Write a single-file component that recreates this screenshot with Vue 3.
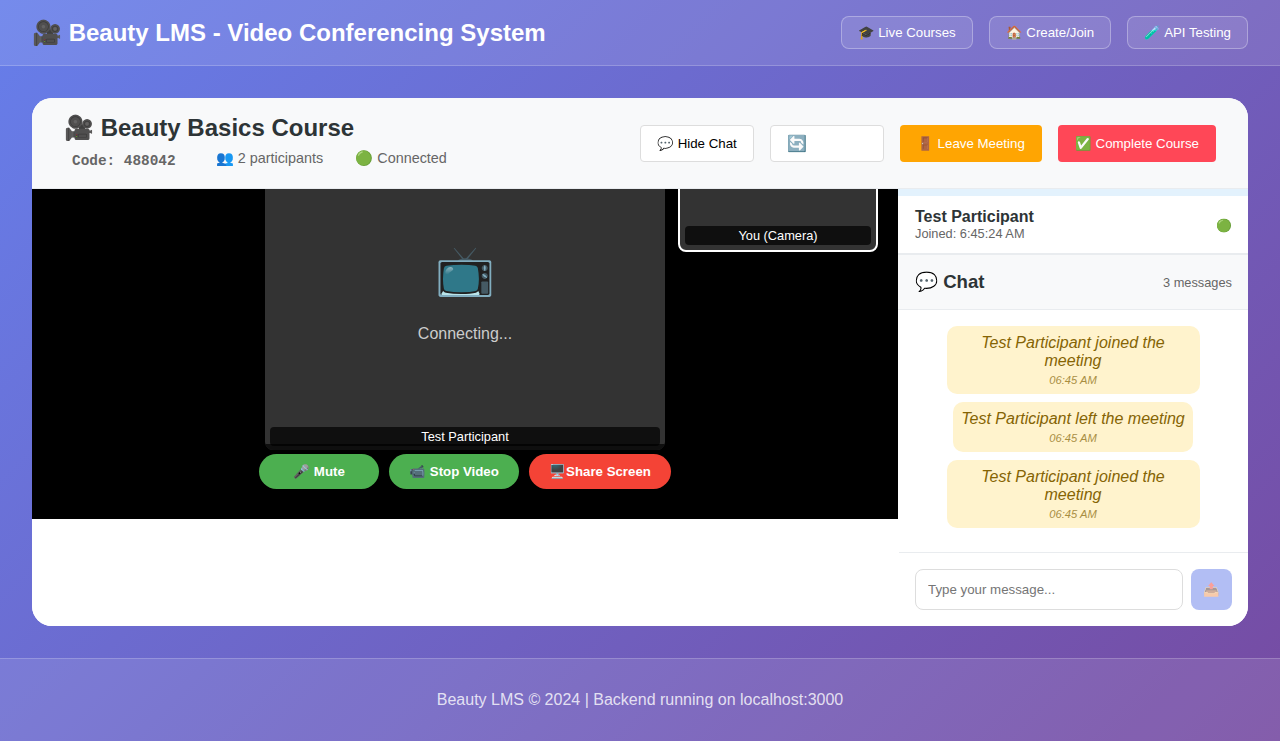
<template>
  <div class="page">
    <header class="top-bar">
      <h1>🎥 Beauty LMS - Video Conferencing System</h1>
      <nav class="top-nav">
        <button v-for="link in links" :key="link" class="nav-btn">{{ link }}</button>
      </nav>
    </header>

    <main class="main">
      <section class="meeting">
        <div class="meeting-header">
          <div class="meeting-info">
            <h2>🎥 Beauty Basics Course</h2>
            <div class="meeting-meta">
              <span class="code">Code: 488042</span>
              <span>👥 2 participants</span>
              <span>🟢 Connected</span>
            </div>
          </div>
          <div class="meeting-actions">
            <button class="action-btn light">💬 Hide Chat</button>
            <button class="action-btn light refresh"><span class="refresh-icon">🔄</span></button>
            <button class="action-btn leave">🚪 Leave Meeting</button>
            <button class="action-btn complete">✅ Complete Course</button>
          </div>
        </div>

        <div class="meeting-body">
          <div class="video-col">
            <div class="video-area">
              <div class="remote-video">
                <div class="placeholder">
                  <div class="placeholder-icon">📺</div>
                  <p>Connecting...</p>
                </div>
                <div class="video-label">Test Participant</div>
              </div>
              <div class="local-video">
                <div class="video-label">You (Camera)</div>
              </div>
              <div class="controls">
                <button class="ctrl-btn green mute">🎤 Mute</button>
                <button class="ctrl-btn green stop">📹 Stop Video</button>
                <button class="ctrl-btn red share">🖥️Share Screen</button>
              </div>
            </div>
          </div>

          <aside class="sidebar">
            <div class="participants">
              <div class="participant">
                <div>
                  <div class="p-name">Test Participant</div>
                  <div class="p-joined">Joined: 6:45:24 AM</div>
                </div>
                <span class="p-status">🟢</span>
              </div>
            </div>

            <div class="chat-header">
              <h3>💬 Chat</h3>
              <span class="msg-count">{{ messages.length }} messages</span>
            </div>

            <div class="chat-messages">
              <div v-for="(msg, i) in messages" :key="i" class="sys-msg">
                <div class="sys-text">{{ msg }}</div>
                <div class="sys-time">06:45 AM</div>
              </div>
            </div>

            <div class="chat-input">
              <input type="text" placeholder="Type your message..." />
              <button class="send-btn">📤</button>
            </div>
          </aside>
        </div>
      </section>
    </main>

    <footer class="footer">Beauty LMS © 2024 | Backend running on localhost:3000</footer>
  </div>
</template>

<script setup>
const links = ['🎓 Live Courses', '🏠 Create/Join', '🧪 API Testing']

const messages = [
  'Test Participant joined the meeting',
  'Test Participant left the meeting',
  'Test Participant joined the meeting'
]
</script>

<style>
body {
  margin: 0;
}
</style>

<style scoped>
.page {
  height: 741px;
  display: flex;
  flex-direction: column;
  overflow: hidden;
  background: linear-gradient(135deg, #667eea 0%, #764ba2 100%);
  font-family: "Liberation Sans", Arial, sans-serif;
}

.top-bar {
  height: 65px;
  flex: none;
  display: flex;
  justify-content: space-between;
  align-items: center;
  padding: 0 32px;
  background: rgba(255, 255, 255, 0.1);
  border-bottom: 1px solid rgba(255, 255, 255, 0.2);
}

.top-bar h1 {
  margin: 0;
  color: white;
  font-size: 24px;
  font-weight: 700;
}

.top-nav {
  display: flex;
  gap: 16px;
}

.nav-btn {
  height: 33px;
  padding: 0 16px;
  color: white;
  font-family: inherit;
  font-size: 13.28px;
  background: rgba(255, 255, 255, 0.1);
  border: 1px solid rgba(255, 255, 255, 0.3);
  border-radius: 8px;
}

.main {
  flex: 1;
  padding: 32px;
  min-height: 0;
}

.meeting {
  height: 528px;
  display: flex;
  flex-direction: column;
  overflow: hidden;
  background: white;
  border-radius: 20px;
}

.meeting-header {
  height: 90px;
  flex: none;
  display: flex;
  justify-content: space-between;
  align-items: center;
  padding: 0 32px;
  background: #f8f9fa;
  border-bottom: 1px solid #e9ecef;
}

.meeting-info {
  padding-bottom: 3px;
}

.meeting-info h2 {
  margin: 0;
  color: #2d3436;
  font-size: 24px;
  font-weight: 700;
}

.meeting-meta {
  display: flex;
  align-items: center;
  gap: 32px;
  margin-top: 5px;
  color: #666;
  font-size: 14.4px;
}

.code {
  margin-top: 6px;
  padding: 0 8px;
  font-family: "Liberation Mono", monospace;
  font-weight: 700;
  font-size: 14.4px;
}

.meeting-actions {
  display: flex;
  gap: 16px;
}

.action-btn {
  height: 37px;
  padding: 0 16px;
  border-radius: 4px;
  font-family: inherit;
  font-size: 13.3px;
  color: white;
  border: 1px solid transparent;
}

.action-btn.light {
  width: 114px;
  color: black;
  background: white;
  border: 1px solid #ddd;
}

.refresh {
  text-align: left;
}

.refresh-icon {
  font-size: 16px;
}

.leave {
  background: #ffa502;
}

.complete {
  background: #ff4757;
}

.meeting-body {
  flex: 1;
  display: flex;
  min-height: 0;
}

.video-col {
  flex: 1;
  min-width: 0;
  background: white;
}

.video-area {
  position: relative;
  height: 330px;
  display: flex;
  flex-direction: column;
  align-items: center;
  overflow: hidden;
  background: black;
}

.remote-video {
  position: relative;
  width: 400px;
  height: 261px;
  flex: none;
  display: flex;
  align-items: center;
  justify-content: center;
  overflow: hidden;
  background: #333;
  border-radius: 0 0 8px 8px;
}

.remote-video::after {
  content: "";
  position: absolute;
  left: 0;
  right: 0;
  bottom: 0;
  height: 6px;
  background: rgba(0, 0, 0, 0.7);
}

.placeholder {
  text-align: center;
  color: #ccc;
  padding-bottom: 54px;
}

.placeholder-icon {
  font-size: 48px;
  line-height: 56px;
  margin-bottom: 26px;
}

.placeholder p {
  margin: 0;
  font-size: 16px;
}

.video-label {
  position: absolute;
  left: 5px;
  right: 5px;
  bottom: 4px;
  height: 19px;
  line-height: 19px;
  text-align: center;
  color: white;
  font-size: 12.8px;
  background: rgba(0, 0, 0, 0.7);
  border-radius: 4px;
}

.local-video {
  position: absolute;
  top: -87px;
  right: 20px;
  width: 196px;
  height: 146px;
  background: #333;
  border: 2px solid white;
  border-radius: 8px;
}

.local-video .video-label {
  bottom: 5px;
}

.controls {
  display: flex;
  gap: 10px;
  margin-top: 4px;
}

.ctrl-btn {
  height: 35px;
  padding: 0;
  color: white;
  font-family: inherit;
  font-size: 13.28px;
  font-weight: 700;
  border: none;
  border-radius: 25px;
}

.mute {
  width: 120px;
}

.stop {
  width: 130px;
}

.share {
  width: 142px;
}

.green {
  background: #4caf50;
}

.red {
  background: #f44336;
}

.sidebar {
  width: 350px;
  flex: none;
  display: flex;
  flex-direction: column;
  background: white;
}

.participants {
  height: 66px;
  flex: none;
  padding-top: 7px;
  box-sizing: border-box;
  background: #e3f2fd;
  border-bottom: 2px solid #e9ecef;
}

.participant {
  height: 57px;
  display: flex;
  justify-content: space-between;
  align-items: center;
  padding: 0 16px 0 17px;
  background: white;
}

.p-name {
  color: #2d3436;
  font-size: 16px;
  font-weight: 700;
}

.p-joined {
  color: #666;
  font-size: 12.8px;
}

.p-status {
  margin-top: 2px;
  font-size: 12.8px;
}

.chat-header {
  height: 54px;
  flex: none;
  display: flex;
  justify-content: space-between;
  align-items: center;
  padding: 0 16px 0 17px;
  background: #f8f9fa;
  border-bottom: 1px solid #e9ecef;
}

.chat-header h3 {
  margin: 0;
  color: #2d3436;
  font-size: 18.6px;
  font-weight: 700;
}

.msg-count {
  color: #666;
  font-size: 12.8px;
}

.chat-messages {
  flex: 1;
  min-height: 0;
  display: flex;
  flex-direction: column;
  align-items: center;
  gap: 8px;
  padding: 16px 0 0;
}

.sys-msg {
  box-sizing: border-box;
  max-width: 253px;
  padding: 8px 8px 7px;
  text-align: center;
  background: #fff3cd;
  border-radius: 10px;
  color: #856404;
  font-style: italic;
}

.sys-text {
  font-size: 16px;
  line-height: 18px;
}

.sys-time {
  margin-top: 4px;
  font-size: 11.2px;
  line-height: 13px;
  opacity: 0.7;
}

.chat-input {
  height: 74px;
  flex: none;
  box-sizing: border-box;
  display: flex;
  align-items: center;
  gap: 8px;
  margin-left: 1px;
  padding: 0 16px;
  border-top: 1px solid #e9ecef;
}

.chat-input input {
  flex: 1;
  min-width: 0;
  height: 41px;
  box-sizing: border-box;
  padding: 0 12px;
  font-family: inherit;
  font-size: 13.3px;
  background: white;
  border: 1px solid #ddd;
  border-radius: 8px;
}

.send-btn {
  width: 41px;
  height: 41px;
  padding: 0;
  font-size: 13.3px;
  border: none;
  border-radius: 8px;
  background: #667eea;
  opacity: 0.5;
}

.footer {
  height: 83px;
  flex: none;
  box-sizing: border-box;
  display: flex;
  align-items: center;
  justify-content: center;
  color: rgba(255, 255, 255, 0.8);
  font-size: 16px;
  background: rgba(255, 255, 255, 0.1);
  border-top: 1px solid rgba(255, 255, 255, 0.2);
}
</style>
